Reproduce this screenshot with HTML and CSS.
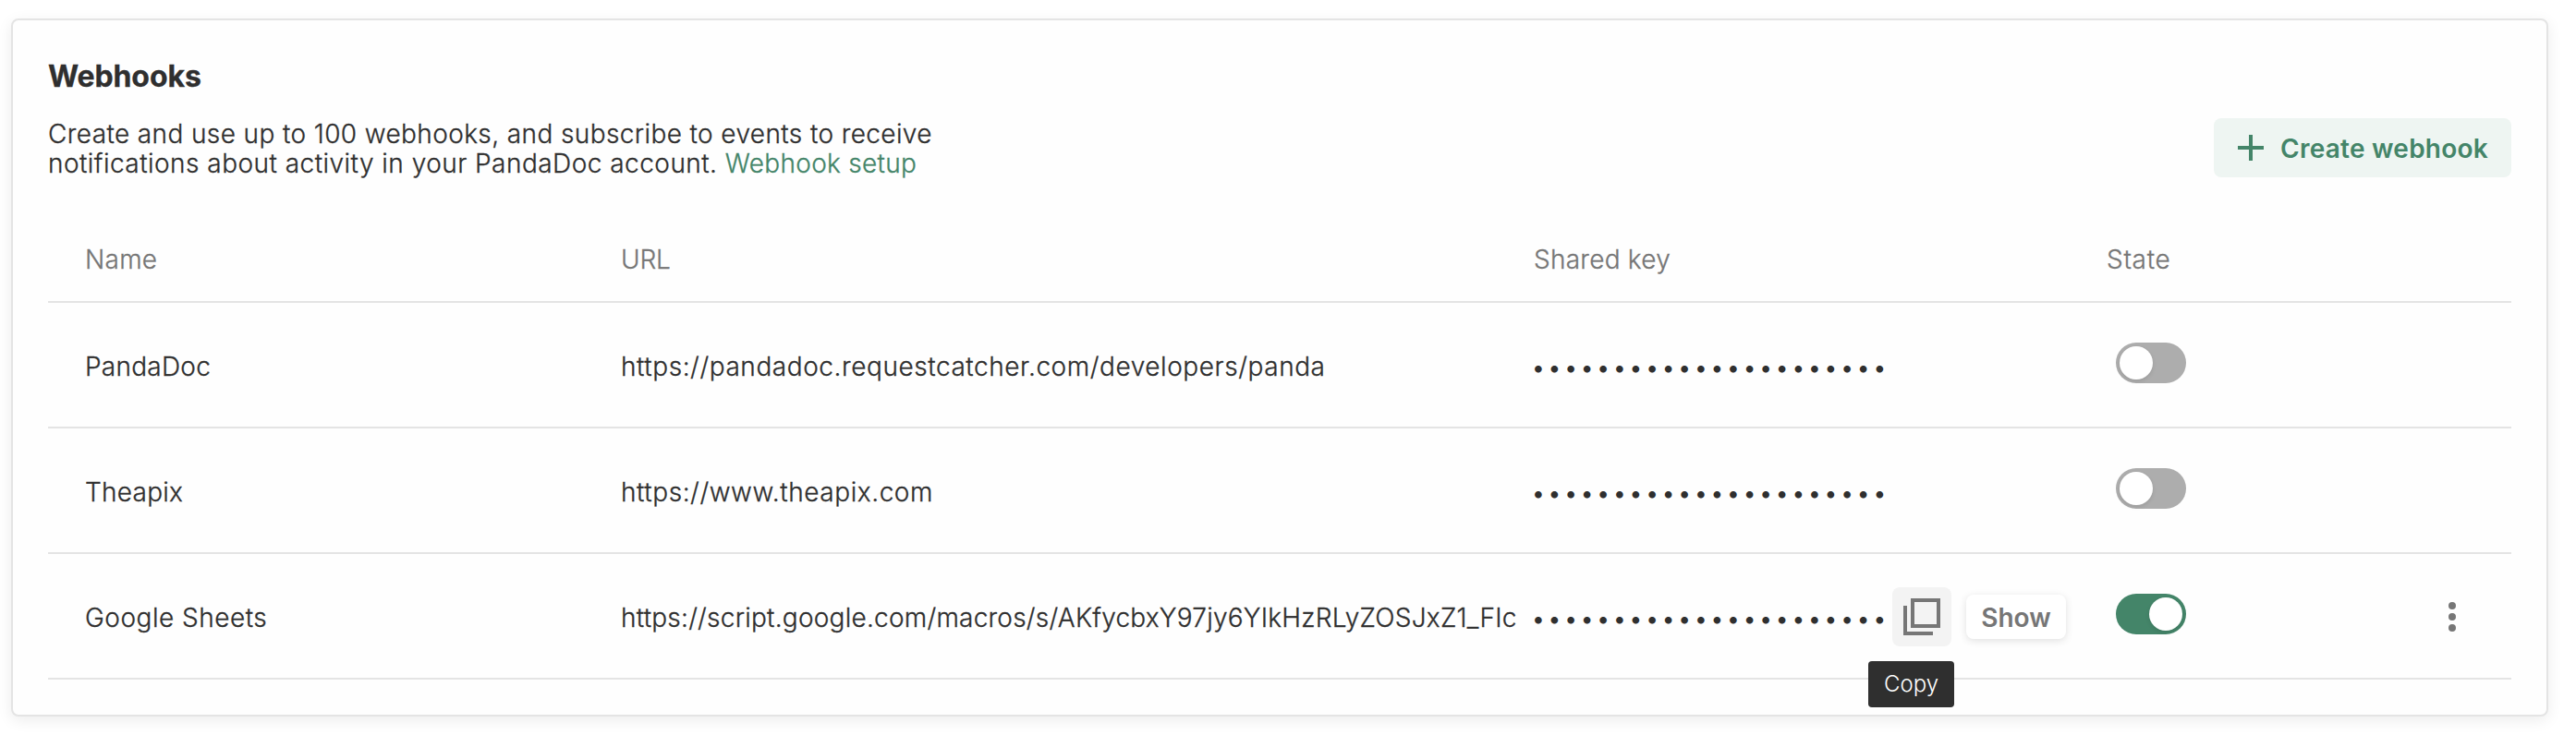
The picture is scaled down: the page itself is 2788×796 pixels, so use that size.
FILE: index.html
```html
<!DOCTYPE html>
<html lang="en">
<head>
<meta charset="utf-8">
<title>Webhooks</title>
<link rel="stylesheet" href="styles.css">
</head>
<body>
<main class="card">
  <h1 class="title">Webhooks</h1>
  <div class="intro">
    <p class="lead">Create and use up to 100 webhooks, and subscribe to events to receive<br><span class="lead-end">notifications about activity in your PandaDoc account. </span><a class="link">Webhook setup</a></p>
    <button class="create">
      <svg class="plus" viewBox="0 0 28 28"><path d="M14 0v28M0 14h28" fill="none" stroke="currentColor" stroke-width="4"/></svg>
      <span class="label">Create webhook</span>
    </button>
  </div>
  <section class="table">
    <div class="row head">
      <span>Name</span><span class="head-url">URL</span><span>Shared key</span><span class="head-state">State</span>
    </div>
    <div class="row">
      <span class="name">PandaDoc</span>
      <span class="url">https://pandadoc.requestcatcher.com/developers/panda</span>
      <div class="key"><span class="dots">••••••••••••••••••••••</span></div>
      <div class="state"><span class="toggle"><i class="knob"></i></span></div>
    </div>
    <div class="row">
      <span class="name">Theapix</span>
      <span class="url">https://www.theapix.com</span>
      <div class="key"><span class="dots">••••••••••••••••••••••</span></div>
      <div class="state"><span class="toggle"><i class="knob"></i></span></div>
    </div>
    <div class="row">
      <span class="name name-wide">Google Sheets</span>
      <span class="url url-long">https://script.google.com/macros/s/AKfycbxY97jy6YIkHzRLyZOSJxZ1_FIc</span>
      <div class="key">
        <span class="dots">••••••••••••••••••••••</span>
        <button class="copy">
          <svg class="copy-icon" viewBox="0 0 40 40"><path d="M10 2h28v28H10zM2 8v30h30" fill="none" stroke="currentColor" stroke-width="4"/></svg>
          <span class="tooltip">Copy</span>
        </button>
        <button class="show"><span class="label">Show</span></button>
      </div>
      <div class="state"><span class="toggle on"><i class="knob"></i></span></div>
      <svg class="more" viewBox="0 0 8 32"><circle cx="4" cy="4" r="4"/><circle cx="4" cy="16" r="4"/><circle cx="4" cy="28" r="4"/></svg>
    </div>
  </section>
</main>
</body>
</html>
```
FILE: styles.css
```css
* { box-sizing: border-box; }
body {
  margin: 0;
  padding: 20px 30px 20px 12px;
  background: #fff;
  color: #2f2f2f;
  font: 300 28px/32px Inter, "Liberation Sans", sans-serif;
  -webkit-text-stroke: .3px currentColor;
}
button {
  border: 0;
  margin: 0;
  padding: 0;
  font: inherit;
  font-weight: 600;
  -webkit-text-stroke: 0;
}
.label { padding-top: 2px; }
.card {
  height: 756px;
  padding: 0 38px;
  border: 2px solid #e4e4e4;
  border-radius: 8px;
  background: #fefefe;
  box-shadow: 0 4px 16px rgba(0, 0, 0, .08);
}
.title { margin: 41px 0 0; font-size: 32px; line-height: 40px; font-weight: 700; letter-spacing: -.1px; }
.intro { display: flex; justify-content: space-between; margin-top: 25px; height: 64px; }
.lead { margin: 1px 0 0; white-space: nowrap; letter-spacing: .39px; }
.lead-end { letter-spacing: .47px; }
.link { color: #448569; letter-spacing: .3px; }
.create {
  display: flex;
  align-items: center;
  gap: 18px;
  width: 322px;
  height: 64px;
  padding-left: 26px;
  border-radius: 8px;
  background: #eef5f2;
  color: #448569;
  white-space: nowrap;
  letter-spacing: .25px;
}
.plus { width: 28px; height: 28px; }
.table { margin-top: 44px; }
.row {
  display: grid;
  grid-template-columns: 580px 988px 620px 370px 8px;
  align-items: center;
  height: 136px;
  padding-left: 40px;
  border-bottom: 2px solid #e4e4e4;
}
.head { height: 92px; color: #767676; letter-spacing: .25px; }
.head-url { letter-spacing: -.2px; }
.head-state { letter-spacing: .7px; }
.name, .url { padding-top: 4px; white-space: nowrap; letter-spacing: .25px; }
.url { letter-spacing: .56px; }
.name-wide { letter-spacing: .5px; }
.url-long { letter-spacing: .23px; }
.key { display: flex; align-items: center; padding-top: 2px; white-space: nowrap; }
.dots {
  width: 391px;
  margin-left: -3px;
  padding-top: 4px;
  letter-spacing: 1.84px;
  -webkit-text-stroke: 0;
}
.copy {
  position: relative;
  display: grid;
  place-items: center;
  width: 64px;
  height: 64px;
  border-radius: 8px;
  background: #f3f3f3;
  color: #767676;
}
.copy-icon { width: 40px; height: 40px; }
.tooltip {
  position: absolute;
  left: -26px;
  top: 80px;
  width: 93px;
  height: 50px;
  border-radius: 4px;
  background: #2f2f2f;
  color: #fff;
  font-size: 24px;
  line-height: 50px;
  font-weight: 300;
}
.show {
  display: flex;
  align-items: center;
  justify-content: center;
  width: 108px;
  height: 48px;
  margin-left: 16px;
  border-radius: 8px;
  background: #fff;
  color: #767676;
  box-shadow: 0 2px 8px rgba(0, 0, 0, .12);
}
.state { padding: 0 0 4px 10px; }
.toggle {
  display: flex;
  width: 76px;
  height: 44px;
  padding: 4px;
  border-radius: 22px;
  background: #adadad;
}
.knob { width: 36px; height: 36px; border-radius: 50%; background: #fff; box-shadow: 0 2px 4px rgba(0, 0, 0, .1); }
.on { justify-content: flex-end; background: #448569; }
.more { width: 8px; height: 32px; margin-top: 2px; fill: #767676; }
```
